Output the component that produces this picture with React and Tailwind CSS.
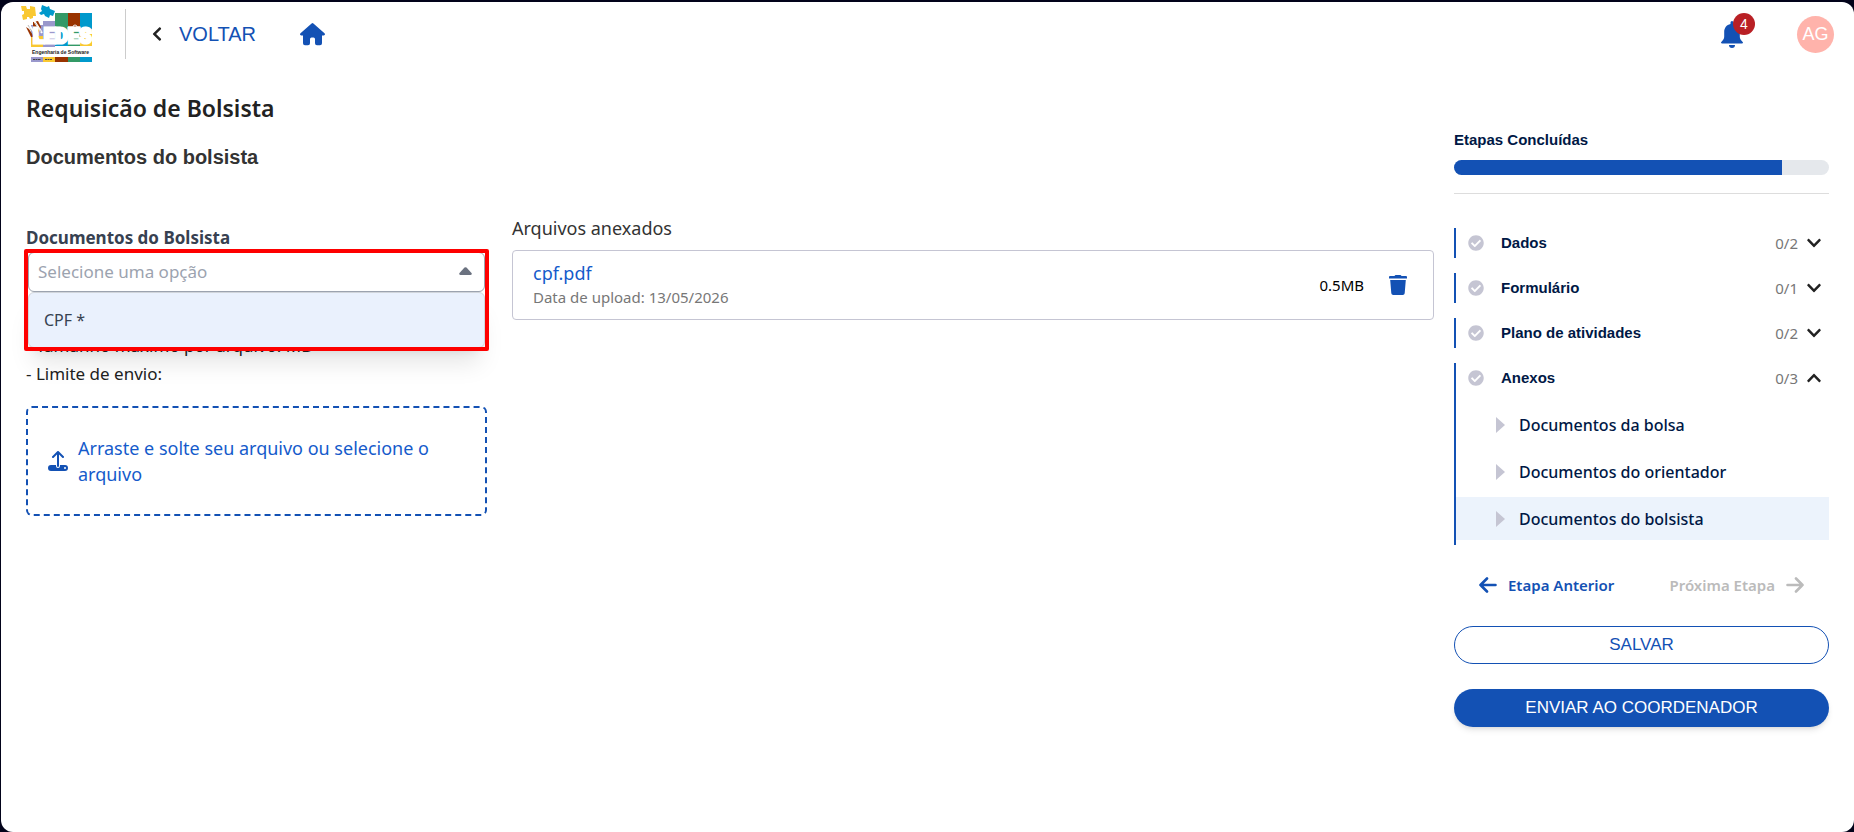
import React, { useState } from "react";
import { FaCheckCircle, FaChevronDown, FaChevronLeft, FaChevronUp } from "react-icons/fa";

const sans = "font-['Liberation_Sans',Arial,sans-serif]";

const steps = [
  { name: "Dados", count: "0/2" },
  { name: "Formulário", count: "0/1" },
  { name: "Plano de atividades", count: "0/2" },
  {
    name: "Anexos",
    count: "0/3",
    items: ["Documentos da bolsa", "Documentos do orientador", "Documentos do bolsista"],
  },
];

const files = [{ name: "cpf.pdf", date: "13/05/2026", size: "0.5MB" }];

function Logo() {
  return (
    <svg width="72" height="58" viewBox="0 0 72 58" role="img" aria-label="LEDES Engenharia de Software">
      <rect x="10" y="20" width="12" height="22" fill="#9a98cc" />
      <rect x="10" y="31" width="12" height="11" fill="#f9c831" />
      <rect x="22" y="16" width="12" height="26" fill="#9a98cc" />
      <rect x="34" y="8" width="13" height="18" fill="#339966" />
      <rect x="34" y="26" width="13" height="15" fill="#0099cc" />
      <rect x="47" y="8" width="12" height="14" fill="#993300" />
      <rect x="47" y="22" width="12" height="19" fill="#339966" />
      <rect x="59" y="8" width="12" height="17" fill="#0099cc" />
      <rect x="59" y="25" width="12" height="16" fill="#f9c831" />
      <path d="M34 26h4a2 2 0 1 1 4 0h5v-4h5a2 2 0 1 1 4 0h3v3h12" fill="none" stroke="#eee" strokeWidth="1" />
      {/* loose puzzle pieces */}
      <path d="M0 1l5 0 1 3 3 0 0-3 5 1 1 9-3 0 0 2-3 1-1-2-2 0 0 2-4 1-1-5 2-1 0-3-2 0z" fill="#f9c831" />
      <path d="M21 0l5 2 2-1 1 3 5 2-2 5-3-1-1 3-4-2-1-2-3 1-2-2 3-2-1-2z" fill="#0099cc" />
      <path d="M12 17l5-1 3 6-3 6-5-5z" fill="#993300" />
      <path d="M5 22l3 2 5 8-3 0z" fill="#993300" />
      <path d="M7 18l11 17M12 14l9 14" stroke="#fff" strokeWidth="2" />
      <path d="M7 20l7 12M14 18l6 9" stroke="#bbb" strokeWidth="1" strokeDasharray="3 1" />
      <text x="12" y="38" fontSize="20" fontWeight="bold" fontFamily="Roboto,sans-serif" fill="#fff" stroke="#fff" strokeWidth="3">LEDES</text>
      <rect x="10" y="42" width="62" height="9" fill="#fff" />
      <text x="11" y="49" fontSize="5" fontWeight="bold" fontFamily="'Liberation Sans',sans-serif" fill="#222">Engenharia de Software</text>
      <rect x="10" y="52" width="12" height="5" fill="#9a98cc" />
      <rect x="22" y="52" width="12" height="5" fill="#f9c831" />
      <rect x="34" y="52" width="13" height="5" fill="#993300" />
      <rect x="47" y="52" width="12" height="5" fill="#339966" />
      <rect x="59" y="52" width="12" height="5" fill="#0099cc" />
      <path d="M12 54.5h8M24 54.5h7" stroke="#444" strokeWidth="1" strokeDasharray="2 .5" />
    </svg>
  );
}

function HomeIcon() {
  return (
    <svg width="25" height="23" viewBox="0 0 25 23" fill="#1351b4">
      <path d="M11.6.5a1.4 1.4 0 0 1 1.800 0L24.500 10.300c.9.8.4 2.200-.8 2.200H22v7.800a2 2 0 0 1-2 2h-3a2 2 0 0 1-2-2v-4.300a1.500 1.500 0 0 0-1.500-1.500h-2a1.500 1.500 0 0 0-1.500 1.500v4.300a2 2 0 0 1-2 2H5a2 2 0 0 1-2-2v-7.800H1.300c-1.200 0-1.700-1.400-.8-2.200z" />
    </svg>
  );
}

function BellIcon() {
  return (
    <svg width="22" height="27" viewBox="0 0 22 27" fill="#1351b4">
      <path d="M9.500 3V1.500a1.500 1.500 0 0 1 3 0V3c4 .8 6.300 4 6.300 8v4.500c0 2 .8 3.500 2.900 5.400.6.6.2 1.600-.6 1.600H.9c-.8 0-1.200-1-.6-1.600 2.100-1.900 2.900-3.400 2.900-5.400V11c0-4 2.300-7.200 6.300-8z" />
      <path d="M8 24h6a3 3 0 0 1-6 0z" />
    </svg>
  );
}

function UploadIcon() {
  return (
    <svg width="20" height="20" viewBox="0 0 20 20" fill="none" stroke="#1351b4" strokeWidth="2" strokeLinecap="round" strokeLinejoin="round">
      <path d="M10 15V1.500M5 6l5-5 5 5" />
      <path d="M3 14h5v1a2 2 0 0 0 4 0v-1h5a3 3 0 0 1 0 6H3a3 3 0 0 1 0-6z" fill="#1351b4" stroke="none" />
      <circle cx="17" cy="17" r="1" fill="#fff" stroke="none" />
    </svg>
  );
}

function TrashIcon() {
  return (
    <svg width="18" height="20" viewBox="0 0 18 20" fill="#1351b4">
      <path d="M1 1h4.500c.3-.6.7-1 1.300-1h4.400c.6 0 1 .4 1.300 1H17a1 1 0 0 1 1 1v1.500H0V2a1 1 0 0 1 1-1z" />
      <path d="M1.200 5h15.600l-1.100 13.200a2 2 0 0 1-2 1.800H4.300a2 2 0 0 1-2-1.800z" />
    </svg>
  );
}

function ArrowIcon({ className }) {
  return (
    <svg className={className} width="18" height="16" viewBox="0 0 18 16" fill="none" stroke="currentColor" strokeWidth="2.6" strokeLinecap="round" strokeLinejoin="round">
      <path d="M16.500 8H1.500M8 1.500L1.500 8 8 14.500" />
    </svg>
  );
}

function Header() {
  return (
    <header className="flex items-center px-5 h-16">
      <Logo />
      <div className="w-px h-[50px] bg-[#ccc] ml-8" />
      <a href="#voltar" className={`${sans} flex items-center gap-[14px] ml-[23px] text-xl text-[#1351b4]`}>
        <FaChevronLeft className="text-[#222] text-base" />
        VOLTAR
      </a>
      <a href="#inicio" aria-label="Início" className="ml-11">
        <HomeIcon />
      </a>
      <button type="button" aria-label="Notificações" className="relative ml-auto">
        <BellIcon />
        <span className={`${sans} absolute -top-2 left-3 size-[22px] rounded-full bg-[#b92025] text-white text-sm leading-[22px]`}>4</span>
      </button>
      <div className={`${sans} ml-[54px] size-[37px] rounded-full bg-[#ffb3ab] text-white text-lg flex items-center justify-center`}>AG</div>
    </header>
  );
}

function DocumentForm() {
  const [doc, setDoc] = useState("");

  return (
    <div>
      <label htmlFor="documento" className="block pt-3 text-[17px] leading-6 font-bold text-[#374151]">Documentos do Bolsista</label>
      <div className="relative mt-0.5 mx-0.5">
        <select
          id="documento"
          value={doc}
          onChange={(e) => setDoc(e.target.value)}
          className="appearance-none block w-full h-10 px-[9px] rounded-md border border-[#9ca3af] bg-white text-[17px] text-[#9ca3af]"
        >
          <option value="">Selecione uma opção</option>
          <option value="cpf">CPF *</option>
        </select>
        <svg className="absolute right-[13px] top-[15px] pointer-events-none" width="13" height="8" viewBox="0 0 13 8" fill="#6b7280">
          <path d="M5.500.6a1.500 1.500 0 0 1 2 0l5 5.400c.7.800.200 2-.9 2H1.400C.3 8-.2 6.800.500 6z" />
        </svg>
        {/* open list */}
        <ul className="absolute left-0 right-0 top-full z-10 rounded-md border border-[#d1d5db] bg-[#eaf1fd] shadow-xl">
          <li className="h-[54px] px-[15px] flex items-center text-base text-[#374151]">CPF *</li>
        </ul>
        <div className="absolute -inset-x-1 -top-[3px] h-[102px] z-20 border-4 border-[#fe0000] rounded-xs pointer-events-none" />
      </div>
      <div className="pt-3 text-[17px] leading-7 text-[#222]">
        <p>-</p>
        <p>- Tamanho máximo por arquivo: MB</p>
        <p>- Limite de envio:</p>
      </div>
      <button type="button" className="mt-[18px] w-full h-[110px] px-5 flex items-center gap-[10px] rounded-md border-2 border-dashed border-[#1351b4] text-left text-lg leading-[26px] text-[#155bcb]">
        <span className="shrink-0"><UploadIcon /></span>
        Arraste e solte seu arquivo ou selecione o arquivo
      </button>
    </div>
  );
}

function FileList() {
  return (
    <div>
      <h3 className="text-lg leading-7 text-[#333]">Arquivos anexados</h3>
      {files.map((file) => (
        <div key={file.name} className="mt-2 h-[70px] pl-5 pr-[26px] flex items-center rounded border border-[#c5c5d3]">
          <div>
            <a href="#arquivo" className="block text-lg leading-6 text-[#155bcb]">{file.name}</a>
            <p className="text-[15px] leading-6 text-[#777]">Data de upload: {file.date}</p>
          </div>
          <span className="ml-auto text-[15px] text-black">{file.size}</span>
          <button type="button" aria-label="Excluir arquivo" className="ml-[25px]">
            <TrashIcon />
          </button>
        </div>
      ))}
    </div>
  );
}

function Step({ step }) {
  const Chevron = step.items ? FaChevronUp : FaChevronDown;
  return (
    <li className="border-l-2 border-[#1351b4]">
      <button type="button" className="w-full h-[30px] pl-3 pr-[7px] flex items-center">
        <FaCheckCircle className="text-base text-[#c5c5d3]" />
        <span className={`${sans} ml-[17px] text-[15px] font-bold text-[#001845]`}>{step.name}</span>
        <span className="ml-auto text-[15px] text-[#777]">{step.count}</span>
        <Chevron className="ml-2 text-base text-[#222]" />
      </button>
      {step.items && (
        <ul className="pt-[10px] pb-[5px] flex flex-col gap-1">
          {step.items.map((item) => (
            <li key={item} className={item === "Documentos do bolsista" ? "bg-[#ecf3fc]" : ""}>
              <a href="#etapa" className="h-[43px] pl-10 flex items-center gap-[14px] text-base font-medium text-[#001845]">
                <svg width="9" height="16" viewBox="0 0 9 16" fill="#c5c5d3"><path d="M0 0l9 8-9 8z" /></svg>
                {item}
              </a>
            </li>
          ))}
        </ul>
      )}
    </li>
  );
}

function Sidebar() {
  return (
    <aside className="w-[375px] shrink-0 pt-[35px]">
      <h3 className={`${sans} text-[15px] leading-6 font-bold text-[#001845]`}>Etapas Concluídas</h3>
      <div className="mt-2 h-[15px] rounded-full bg-[#e5e8ec] overflow-hidden">
        <div className="h-full bg-[#1351b4]" style={{ width: "87.5%" }} />
      </div>
      <hr className="mt-[18px] border-[#ddd]" />
      <ul className="mt-[34px] flex flex-col gap-[15px]">
        {steps.map((step) => (
          <Step key={step.name} step={step} />
        ))}
      </ul>
      <div className="mt-7 px-[25px] flex items-center justify-between text-[15px] leading-6 font-semibold">
        <button type="button" className="flex items-center gap-[11px] text-[#1351b4]">
          <ArrowIcon />
          Etapa Anterior
        </button>
        <button type="button" disabled className="flex items-center gap-[11px] text-[#bbb]">
          Próxima Etapa
          <ArrowIcon className="rotate-180" />
        </button>
      </div>
      <button type="button" className={`${sans} mt-[29px] w-full h-[38px] rounded-full border border-[#1351b4] text-[17px] text-[#1351b4]`}>SALVAR</button>
      <button type="button" className={`${sans} mt-[25px] w-full h-[38px] rounded-full bg-[#1351b4] text-[17px] text-white shadow-md`}>ENVIAR AO COORDENADOR</button>
    </aside>
  );
}

export default function App() {
  return (
    <div className="min-h-screen flex flex-col bg-[#02031a] pt-[2px] pl-px font-['Noto_Sans',sans-serif]">
      <div className="grow rounded-xl bg-white">
        <Header />
        <main className="flex gap-5 px-[25px] pt-[27px]">
          <div className="grow">
            <h1 className="text-[23px] leading-[30px] font-semibold text-[#222]">Requisicão de Bolsista</h1>
            <h2 className={`${sans} mt-[19px] text-xl leading-[30px] font-bold text-[#333]`}>Documentos do bolsista</h2>
            <div className="mt-[42px] grid grid-cols-[1fr_2fr] gap-[25px]">
              <DocumentForm />
              <FileList />
            </div>
          </div>
          <Sidebar />
        </main>
      </div>
    </div>
  );
}
